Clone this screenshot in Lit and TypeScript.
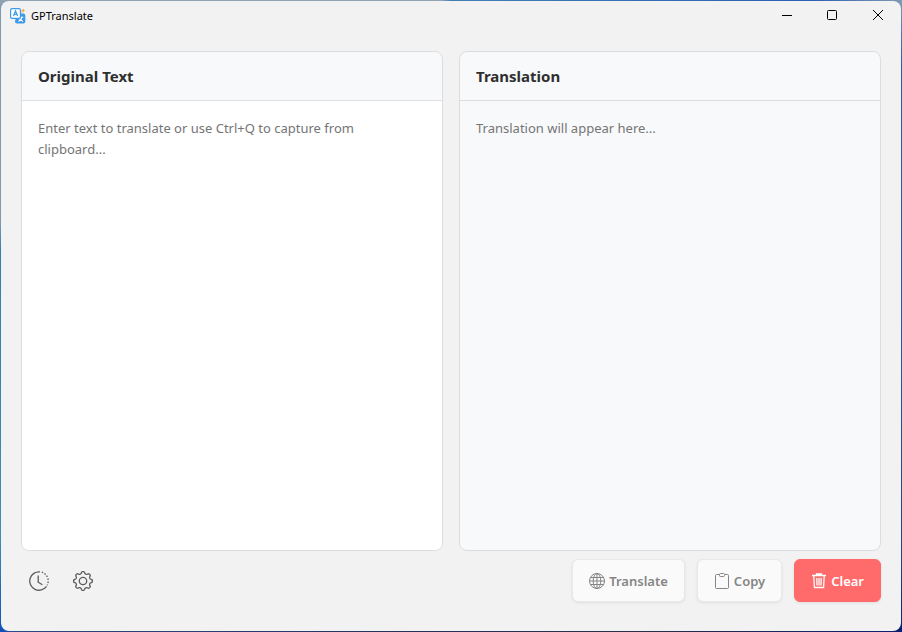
import { LitElement, html, css } from "lit";
import { customElement, state } from "lit/decorators.js";

const logo = html`<svg class="logo" viewBox="0 0 16 16" aria-hidden="true">
  <path d="M13.200 .2l.6 1.700 1.700.6-1.700.6-.6 1.700-.6-1.700-1.700-.6 1.700-.6zM11.200 3.600l1.700.2-1 1.400z" fill="#f5a623" />
  <path d="M6.500 5.500H13.300q2 0 2 2v6q0 2-2 2H7q-2 0-2-2z" fill="#3d9be9" />
  <path d="M7.800 9.200h5.400M10.600 7.900v1.300M12.200 9.200q-.8 2.800-3.800 4.200M9 10q1 2.400 4.100 3.400" stroke="#fff" stroke-width="1.100" fill="none" />
  <rect x=".6" y=".6" width="9.800" height="9.800" rx="1.400" fill="#fff" stroke="#3d9be9" stroke-width="1.200" />
  <path d="M3.400 8l2.100-5.100L7.600 8M4.100 6.400h2.800" fill="none" stroke="#3d9be9" stroke-width="1.200" />
</svg>`;

const minimizeIcon = html`<svg class="caption" viewBox="0 0 12 12" aria-hidden="true"><path d="M2 5.500h10" /></svg>`;
const maximizeIcon = html`<svg class="caption" viewBox="0 0 12 12" aria-hidden="true"><rect x="1.500" y=".5" width="9" height="9" rx="1" /></svg>`;
const closeIcon = html`<svg class="caption" viewBox="0 0 12 12" aria-hidden="true"><path d="M1 0l10 10M11 0L1 10" /></svg>`;

const historyIcon = html`<svg class="tool-icon" viewBox="0 0 20 20" aria-hidden="true">
  <path d="M11 .9a9.200 9.200 0 1 0 6.500 14.400" />
  <path d="M12.800 1.200a9.200 9.200 0 0 1 5.300 13.100" stroke-dasharray="1.500 1.500" />
  <path d="M9.200 4.500v6.700l4.200 2.600" />
</svg>`;

const gearPath = (() => {
  const points: string[] = [];
  const steps = 96;
  for (let i = 0; i < steps; i++) {
    const a = (i / steps) * Math.PI * 2;
    const wave = Math.tanh(2 * Math.cos(8 * a)) / Math.tanh(2);
    const r = 8.4 + 1 * wave;
    points.push(`${(10 + r * Math.sin(a)).toFixed(2)} ${(10 - r * Math.cos(a)).toFixed(2)}`);
  }
  return `M${points.join("L")}Z`;
})();

const gearIcon = html`<svg class="tool-icon" viewBox="0 0 20 20" aria-hidden="true">
  <path d=${gearPath} />
  <circle cx="10" cy="10" r="3.700" />
</svg>`;

const globeIcon = html`<svg class="action-icon" viewBox="0 0 16 16" aria-hidden="true">
  <circle cx="8" cy="8" r="7.500" />
  <ellipse cx="8" cy="8" rx="3.800" ry="7.500" />
  <path d="M8 .5v15M.5 8h15M1.500 4.500h13M1.500 11.500h13" />
</svg>`;

const clipboardIcon = html`<svg class="action-icon" viewBox="0 0 16 16" aria-hidden="true">
  <path d="M5 1.500H2.500a1 1 0 0 0-1 1v12a1 1 0 0 0 1 1h11a1 1 0 0 0 1-1v-12a1 1 0 0 0-1-1H11" />
  <rect x="5.500" y=".5" width="5" height="3" rx="1" />
</svg>`;

const trashIcon = html`<svg class="action-icon trash" viewBox="0 0 16 16" aria-hidden="true">
  <path d="M1 2.500h14M5.500 2.500v-1.500h5v1.500M2.800 3l.6 11.500h9.200L13.200 3" />
  <path d="M5.800 5l.2 7.500M8 5v7.500M10.200 5l-.2 7.500" />
</svg>`;

@customElement("app-root")
export class AppRoot extends LitElement {
  @state() private source = "";
  @state() private result = "";

  static styles = css`
    :host {
      display: block;
      min-height: 100vh;
      font-family: "Noto Sans", "Open Sans", sans-serif;
    }
    * { box-sizing: border-box; }
    button { font: inherit; }
    svg { display: block; fill: none; }
    .desktop {
      display: flex;
      min-height: 100vh;
      padding: 1px;
      background:
        linear-gradient(90deg, #8fa3b3 0 49%, #3f7fb5 50%, #2d5fb5 90%, #7f9ab2) top / 100% 4px no-repeat,
        linear-gradient(90deg, #0f50c0, #2a4a80 2%, #26305a 50%, #2c2f45 70%, #0a1f70) bottom / 100% 4px no-repeat,
        linear-gradient(180deg, #7f9ab2 0%, #7f9ab2 35%, #2f7fb0 40%, #3a8fb5 85%, #0f50c0 100%) left / 50% 100% no-repeat,
        linear-gradient(180deg, #7f9ab2 0%, #3557a8 10%, #2f57b0 50%, #26407a 90%, #0a1f70 100%);
    }
    .window {
      flex: 1;
      display: flex;
      flex-direction: column;
      border-radius: 8px;
      background: #f2f2f2;
      overflow: hidden;
    }
    .titlebar {
      display: flex;
      align-items: center;
      height: 30px;
      padding-left: 9px;
    }
    .logo { width: 16px; height: 16px; }
    .title {
      flex: 1;
      margin: 0;
      padding-left: 5px;
      font-size: 11px;
      font-weight: 400;
      line-height: 16px;
      color: #000;
    }
    .caption-button {
      display: grid;
      place-items: center;
      width: 46px;
      height: 30px;
      padding: 0;
      border: 0;
      background: none;
    }
    .caption { width: 12px; height: 12px; stroke: #000; stroke-width: 1; }
    .panels {
      flex: 1;
      display: grid;
      grid-template-columns: 1fr 1fr;
      gap: 16px;
      padding: 20px 20px 0;
    }
    .panel {
      display: flex;
      flex-direction: column;
      border: 1px solid #dcdde0;
      border-radius: 8px;
      background: #f8f9fb;
      overflow: hidden;
    }
    .panel-title {
      display: block;
      padding: 12px 16px;
      border-bottom: 1px solid #dcdde0;
      font-size: 15px;
      font-weight: 700;
      line-height: 24px;
      color: #2f2f2f;
    }
    .text {
      flex: 1;
      display: block;
      width: 100%;
      padding: 17px 32px 16px 16px;
      border: 0;
      outline: 0;
      resize: none;
      background: #fff;
      color: #333;
      font-family: inherit;
      font-size: 13px;
      line-height: 21px;
    }
    .text::placeholder { color: #757575; opacity: 1; }
    .output { background: transparent; }
    .footer {
      display: flex;
      align-items: center;
      justify-content: space-between;
      padding: 8px 20px 29px;
    }
    .tools { display: flex; gap: 8px; }
    .tool {
      display: grid;
      place-items: center;
      width: 36px;
      height: 36px;
      padding: 0;
      border: 0;
      background: none;
    }
    .tool-icon { width: 20px; height: 20px; stroke: #5c5c5c; stroke-width: 1.3; }
    .actions { display: flex; gap: 12px; }
    .action {
      display: flex;
      align-items: center;
      gap: 4px;
      height: 43px;
      padding: 0 16px;
      border: 1px solid #e8e8e8;
      border-radius: 6px;
      background: #fafafa;
      box-shadow: 0 1px 3px rgba(0, 0, 0, 0.08);
      color: #858585;
      font-size: 13px;
      font-weight: 600;
      line-height: 20px;
    }
    .action-icon { width: 16px; height: 16px; stroke: #858585; stroke-width: 1; }
    .danger { border-color: #ff6b6b; background: #ff6b6b; color: #fff; }
    .trash { stroke: #fff; stroke-width: 1.3; }
  `;

  private onInput(e: Event) {
    this.source = (e.target as HTMLTextAreaElement).value;
  }

  private clear() {
    this.source = "";
    this.result = "";
  }

  render() {
    return html`
      <div class="desktop">
        <div class="window">
          <header class="titlebar">
            ${logo}
            <h1 class="title">GPTranslate</h1>
            <button class="caption-button" aria-label="Minimize">${minimizeIcon}</button>
            <button class="caption-button" aria-label="Maximize">${maximizeIcon}</button>
            <button class="caption-button" aria-label="Close">${closeIcon}</button>
          </header>
          <main class="panels">
            <section class="panel">
              <label class="panel-title" for="source">Original Text</label>
              <textarea class="text" id="source" .value=${this.source} @input=${this.onInput}
                placeholder="Enter text to translate or use Ctrl+Q to capture from clipboard..."></textarea>
            </section>
            <section class="panel">
              <label class="panel-title" for="result">Translation</label>
              <textarea class="text output" id="result" readonly .value=${this.result}
                placeholder="Translation will appear here..."></textarea>
            </section>
          </main>
          <footer class="footer">
            <div class="tools">
              <button class="tool" aria-label="History">${historyIcon}</button>
              <button class="tool" aria-label="Settings">${gearIcon}</button>
            </div>
            <div class="actions">
              <button class="action" ?disabled=${!this.source}>${globeIcon}<span>Translate</span></button>
              <button class="action" ?disabled=${!this.result}>${clipboardIcon}<span>Copy</span></button>
              <button class="action danger" @click=${this.clear}>${trashIcon}<span>Clear</span></button>
            </div>
          </footer>
        </div>
      </div>
    `;
  }
}
